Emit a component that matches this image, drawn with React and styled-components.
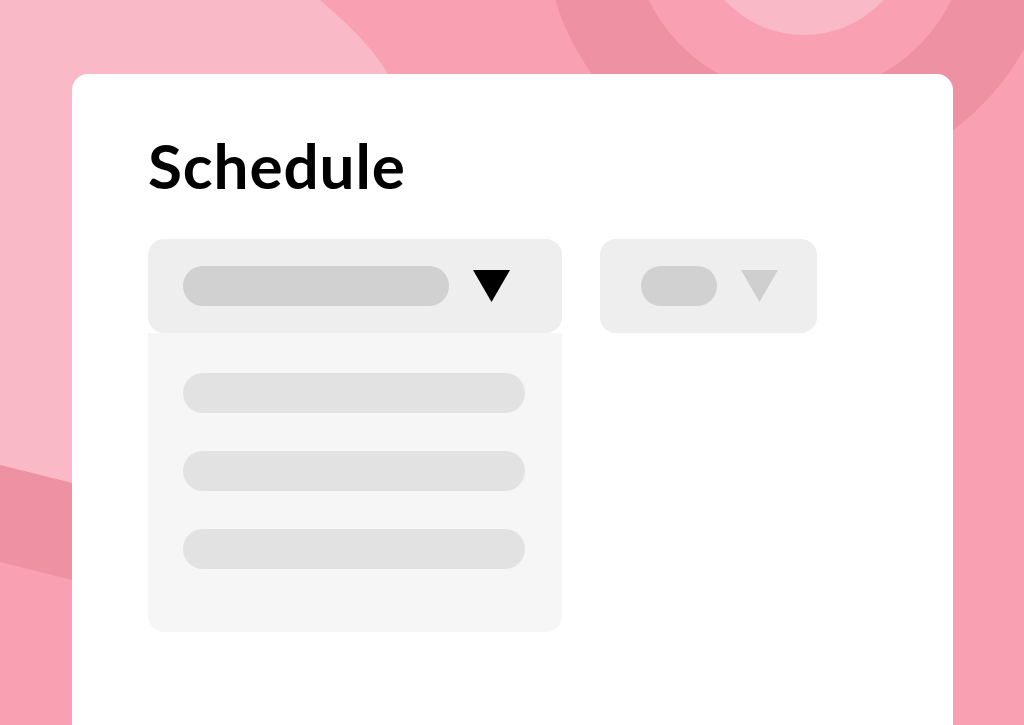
import React from "react";
import styled, { createGlobalStyle } from "styled-components";

const GlobalStyle = createGlobalStyle`
  html, body {
    margin: 0;
    padding: 0;
    background: #f9a1b2;
  }
  * {
    box-sizing: border-box;
  }
`;

const Page = styled.div`
  position: relative;
  width: 1024px;
  height: 725px;
  overflow: hidden;
  background: #f9a1b2;
  padding: 74px 71px 0 72px;
  display: flex;
`;

const Backdrop = styled.svg`
  position: absolute;
  inset: 0;
  width: 1024px;
  height: 725px;
`;

const Card = styled.main`
  position: relative;
  flex: 1;
  height: calc(100% + 20px);
  background: #ffffff;
  border-radius: 16px;
  padding: 60px 0 0 76px;
`;

const Title = styled.h1`
  margin: 0;
  font-family: "Lato", "Liberation Sans", sans-serif;
  font-weight: 700;
  font-size: 62px;
  line-height: 62px;
  color: #000000;
  letter-spacing: 0.9px;
`;

const Controls = styled.div`
  display: flex;
  align-items: flex-start;
  gap: 38px;
  margin-top: 43px;
`;

const Dropdown = styled.div`
  width: ${(props) => props.width}px;
  display: flex;
  flex-direction: column;
`;

const Trigger = styled.div`
  height: 94px;
  background: #eeeeee;
  border-radius: 16px;
  display: flex;
  align-items: center;
  padding-left: ${(props) => props.padLeft}px;
  gap: ${(props) => props.gap}px;
`;

const Pill = styled.div`
  width: ${(props) => props.width}px;
  height: 40px;
  border-radius: 20px;
  background: ${(props) => props.color || "#d1d1d1"};
  flex-shrink: 0;
`;

const Arrow = styled.svg`
  width: 37px;
  height: 32px;
  display: block;
`;

const Menu = styled.div`
  background: #f6f6f6;
  border-radius: 0 0 16px 16px;
  padding: 40px 0 63px 35px;
  display: flex;
  flex-direction: column;
  gap: 38px;
`;

const Caret = ({ color }) => (
  <Arrow viewBox="0 0 37 32">
    <polygon points="0,0 37,0 18.5,32" fill={color} />
  </Arrow>
);

const App = () => {
  return (
    <>
      <GlobalStyle />
      <Page>
        <Backdrop viewBox="0 0 1024 725">
          <path
            d="M0 0 H320 C345 22 372 46 388 74 L480 300 L72 483 L0 465 Z"
            fill="#f9b9c6"
          />
          <path d="M0 465 L72 483 L400 570 L400 680 L72 580 L0 562 Z" fill="#ee91a3" />
          <circle cx="800" cy="-75" r="256" fill="#ee91a3" />
          <circle cx="800" cy="-73" r="168" fill="#f9a1b2" />
          <circle cx="804" cy="-73" r="108" fill="#f9b9c6" />
        </Backdrop>
        <Card>
          <Title>Schedule</Title>
          <Controls>
            <Dropdown width={414}>
              <Trigger padLeft={35} gap={24}>
                <Pill width={266} />
                <Caret color="#000000" />
              </Trigger>
              <Menu>
                <Pill width={342} color="#e2e2e2" />
                <Pill width={342} color="#e2e2e2" />
                <Pill width={342} color="#e2e2e2" />
              </Menu>
            </Dropdown>
            <Dropdown width={217}>
              <Trigger padLeft={41} gap={24}>
                <Pill width={76} />
                <Caret color="#cfcfcf" />
              </Trigger>
            </Dropdown>
          </Controls>
        </Card>
      </Page>
    </>
  );
};

export default App;
